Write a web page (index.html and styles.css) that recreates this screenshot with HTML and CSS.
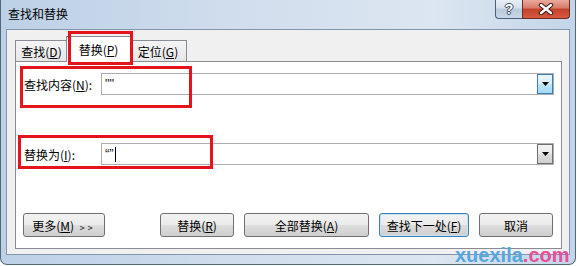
FILE: index.html
```html
<!DOCTYPE html>
<html lang="zh-CN">
<head>
    <meta charset="UTF-8">
    <meta name="viewport" content="width=device-width, initial-scale=1.0">
    <title>查找和替换</title>
    <link rel="stylesheet" href="styles.css">
</head>
<body>
    <div class="window">
        <div class="titlebar">
            <span class="title">查找和替换</span>
            <div class="caption">
                <span class="cap-btn help">?</span>
                <span class="cap-btn close">
                    <svg width="16" height="12" viewBox="0 0 16 12">
                        <path d="M3 2 L13 10 M13 2 L3 10" stroke="#3a1a16" stroke-width="4.4" stroke-linecap="round"/>
                        <path d="M3 2 L13 10 M13 2 L3 10" stroke="#fff" stroke-width="2.4" stroke-linecap="round"/>
                    </svg>
                </span>
            </div>
        </div>
        <div class="client">
            <div class="tabs">
                <div class="tab tab-find">查找(<u>D</u>)</div>
                <div class="tab tab-replace active">替换(<u>P</u>)</div>
                <div class="tab tab-goto">定位(<u>G</u>)</div>
            </div>
            <div class="panel">
                <div class="field-row">
                    <label>查找内容(<u>N</u>):</label>
                    <div class="combo">
                        <span class="value">""</span>
                        <span class="drop hot"><svg width="7" height="4" viewBox="0 0 7 4"><polygon points="0,0 7,0 3.5,4" fill="#000"/></svg></span>
                    </div>
                </div>
                <div class="field-row">
                    <label>替换为(<u>I</u>):</label>
                    <div class="combo">
                        <span class="value">“”<i class="caret"></i></span>
                        <span class="drop"><svg width="7" height="4" viewBox="0 0 7 4"><polygon points="0,0 7,0 3.5,4" fill="#000"/></svg></span>
                    </div>
                </div>
                <div class="buttons">
                    <button class="btn btn-more">更多(<u>M</u>) <span class="chev">&gt;&gt;</span></button>
                    <div class="btn-group">
                        <button class="btn btn-replace">替换(<u>R</u>)</button>
                        <button class="btn btn-all">全部替换(<u>A</u>)</button>
                        <button class="btn btn-next default">查找下一处(<u>F</u>)</button>
                        <button class="btn btn-cancel">取消</button>
                    </div>
                </div>
            </div>
        </div>
        <div class="mark mark-tab"></div>
        <div class="mark mark-find"></div>
        <div class="mark mark-replace"></div>
        <div class="watermark">xuexila<span class="dot-com">.com</span></div>
    </div>
</body>
</html>
```

FILE: styles.css
```css
body {
    margin: 0;
    font-family: "Noto Sans CJK SC", "Liberation Sans", sans-serif;
    font-size: 12px;
    color: #000;
    background: #fff;
}
.window {
    position: relative;
    width: 576px;
    height: 265px;
    box-sizing: border-box;
    border: 1px solid #52667c;
    border-top: none;
    border-radius: 0 0 7px 7px;
    background: linear-gradient(to right, #bcd0e6, #d0dded 40%, #dce6f1 75%, #c3d5e9);
    display: flex;
    flex-direction: column;
}
.titlebar {
    height: 29px;
    display: flex;
    justify-content: space-between;
    align-items: flex-start;
}
.title {
    padding-left: 7px;
    line-height: 28px;
}
.caption {
    display: flex;
    margin-right: 5px;
}
.cap-btn {
    height: 19px;
    box-sizing: border-box;
    border: 1px solid #4d5f74;
    border-top: none;
    display: flex;
    align-items: center;
    justify-content: center;
}
.help {
    width: 27px;
    border-right: none;
    border-radius: 0 0 0 4px;
    background: linear-gradient(#e8eef5, #d5e0ec 45%, #b8c9dc 50%, #c9d8e8);
    color: #fff;
    font: bold 14px "Liberation Sans", sans-serif;
    text-shadow: 1px 0 0 #3b4b5e, -1px 0 0 #3b4b5e, 0 1px 0 #3b4b5e, 0 -1px 0 #3b4b5e;
}
.close {
    width: 48px;
    border-color: #6e2b22;
    border-radius: 0 0 4px 0;
    background: linear-gradient(#e9aa9c, #d87b69 45%, #c2402a 50%, #d65b3f);
}
.client {
    margin: 0 5px;
    height: 226px;
    box-sizing: border-box;
    border: 1px solid #8295aa;
    background: #f0f0f0;
}
.tabs {
    display: flex;
    align-items: flex-end;
    height: 31px;
    padding-left: 8px;
}
.tab {
    height: 21px;
    box-sizing: border-box;
    border: 1px solid #898c95;
    border-bottom: none;
    background: linear-gradient(#f5f5f5, #e6e6e6);
    text-align: center;
    padding-top: 1px;
    line-height: 20px;
}
.tab-find {
    width: 53px;
}
.tab-replace {
    width: 65px;
}
.tab-goto {
    width: 58px;
}
.tab.active {
    position: relative;
    z-index: 1;
    height: 26px;
    margin: 0 -2px -1px;
    padding-top: 3px;
    background: #fff;
}
.panel {
    width: 547px;
    height: 188px;
    box-sizing: border-box;
    margin-left: 8px;
    border: 1px solid #898c95;
    background: #fff;
    padding: 11px 7px 0;
}
.field-row {
    display: flex;
    align-items: center;
    height: 22px;
}
.field-row + .field-row {
    margin-top: 48px;
}
.field-row label {
    width: 77px;
    padding-left: 1px;
}
.combo {
    width: 453px;
    height: 22px;
    box-sizing: border-box;
    border: 1px solid #abadb3;
    display: flex;
    justify-content: space-between;
}
.value {
    padding-left: 3px;
    font-family: "Liberation Sans", sans-serif;
    font-size: 13px;
    color: #222;
    line-height: 20px;
    display: flex;
    align-items: center;
}
.caret {
    width: 1px;
    height: 15px;
    margin-left: 1px;
    background: #000;
}
.drop {
    width: 16px;
    height: 20px;
    box-sizing: border-box;
    border: 1px solid #707070;
    background: linear-gradient(#f2f2f2, #ebebeb 50%, #dddddd 50%, #cfcfcf);
    display: flex;
    align-items: center;
    justify-content: center;
}
.drop.hot {
    border-color: #3c7fb1;
    background: linear-gradient(#eaf6fd, #d9f0fc 50%, #bee6fd 50%, #a7d9f5);
}
.buttons {
    margin-top: 48px;
    display: flex;
    justify-content: space-between;
    padding-right: 1px;
}
.btn-group {
    display: flex;
    gap: 10px;
}
.btn {
    height: 24px;
    box-sizing: border-box;
    border: 1px solid #707070;
    border-radius: 3px;
    background: linear-gradient(#f2f2f2, #ebebeb 50%, #dddddd 50%, #cfcfcf);
    font: inherit;
    color: #000;
    padding: 0;
}
.btn-more {
    width: 82px;
}
.chev {
    font-size: 9px;
    letter-spacing: 3px;
    margin-left: 3px;
}
.btn-replace {
    width: 74px;
}
.btn-all {
    width: 125px;
}
.btn-next {
    width: 90px;
}
.btn-cancel {
    width: 74px;
}
.btn.default {
    border-color: #3c7fb1;
    box-shadow: inset 0 0 0 1px #c4e5f8;
}
.mark {
    position: absolute;
    box-sizing: border-box;
    border: 3px solid #e4141d;
    z-index: 2;
}
.mark-tab {
    left: 67px;
    top: 31px;
    width: 65px;
    height: 34px;
}
.mark-find {
    left: 19px;
    top: 66px;
    width: 172px;
    height: 42px;
}
.mark-replace {
    left: 17px;
    top: 135px;
    width: 195px;
    height: 34px;
}
.watermark {
    position: absolute;
    left: 454px;
    top: 245px;
    font: bold 20px "Liberation Sans", sans-serif;
    line-height: 20px;
    color: #58a6de;
    z-index: 2;
}
.dot-com {
    color: #e64f9b;
}
```
